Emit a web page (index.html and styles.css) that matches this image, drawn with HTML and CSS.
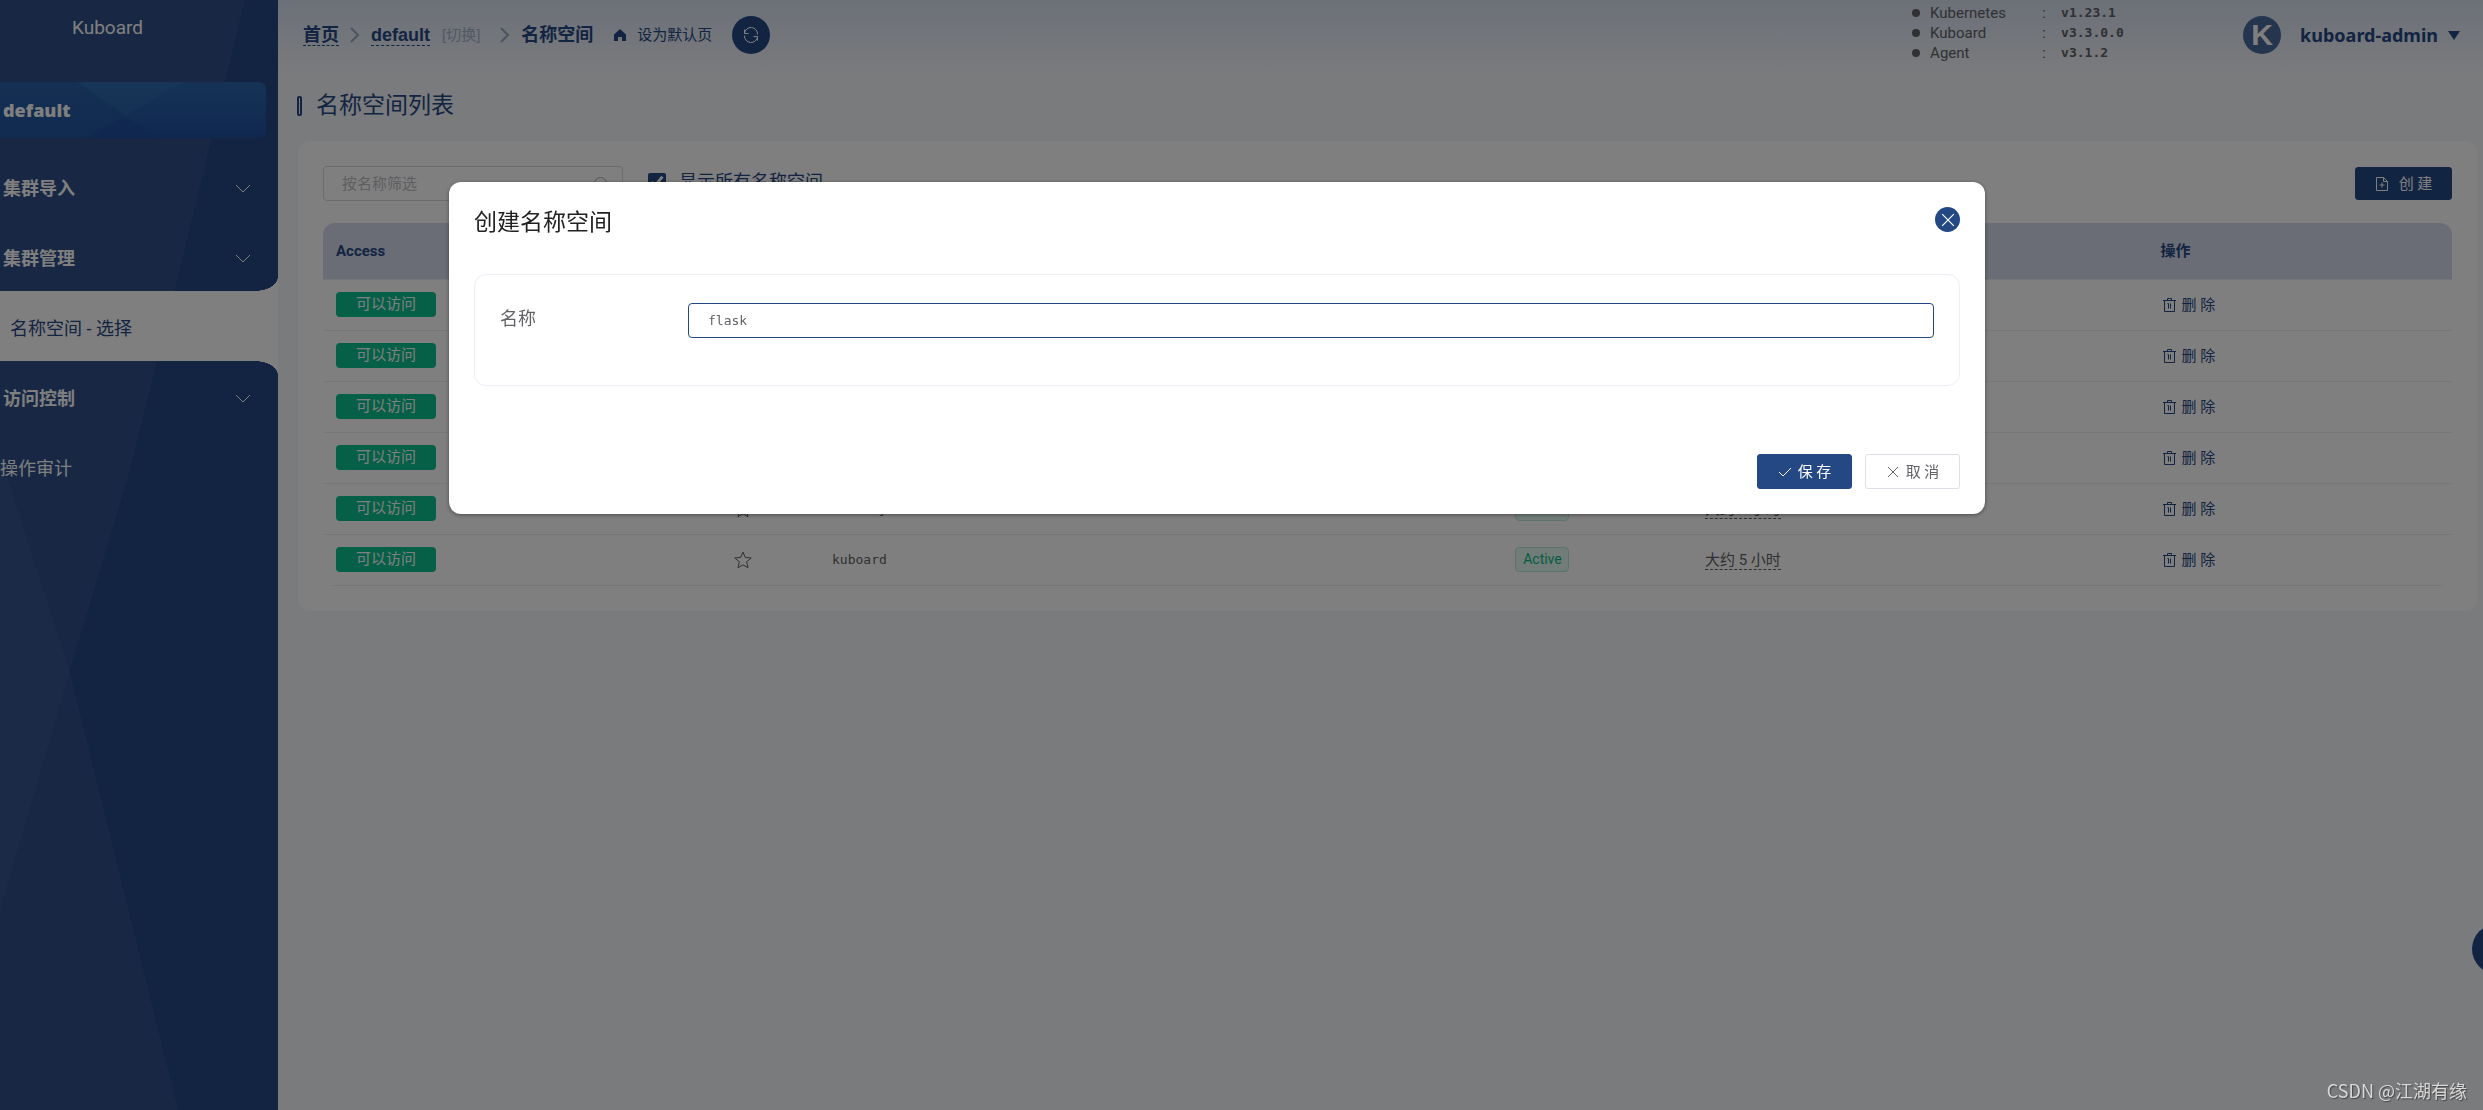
FILE: index.html
```html
<!DOCTYPE html>
<html lang="zh-CN">
<head>
  <meta charset="UTF-8">
  <title>Kuboard</title>
  <link rel="stylesheet" href="styles.css">
</head>
<body>
  <svg class="sprite" aria-hidden="true">
    <symbol id="i-right" viewBox="0 0 10 16"><path d="M1 1l7 7-7 7"/></symbol>
    <symbol id="i-down" viewBox="0 0 14 8"><path d="M0 0l7 7 7-7"/></symbol>
    <symbol id="i-star" viewBox="0 0 18 18"><path d="M9 1l2.200 5.300 6 .7-4.500 3.700 1.300 6L9 13.800l-5 2.900 1.300-6L.800 7l6-.7z"/></symbol>
    <symbol id="i-trash" viewBox="0 0 14 14"><path d="M0 2.500h13M4.500 2.500v-2h4v2M1.500 2.500v11h10v-11M4.500 5.500h1v5M7.500 5.500v5"/></symbol>
    <symbol id="i-file" viewBox="0 0 14 14"><path d="M1.500.5h7l4 4v9h-11zM8.500.5v4h4M7 5.500v5M4.500 8h5"/></symbol>
    <symbol id="i-check" viewBox="0 0 14 10"><path d="M1 5l4 4 8-8"/></symbol>
    <symbol id="i-close" viewBox="0 0 12 12"><path d="M1 1l10 10M11 1L1 11"/></symbol>
    <symbol id="i-search" viewBox="0 0 16 16"><path d="M13.500 7.500a6 6 0 1 1-12 0 6 6 0 0 1 12 0zM12 12l4 4"/></symbol>
    <symbol id="i-refresh" viewBox="0 0 16 16"><path d="M1.500 6.500a6.500 6.500 0 0 1 13 1M1.500 2.500v4h4M14.500 9.500a6.500 6.500 0 0 1-13-1M14.500 13.500v-4h-4"/></symbol>
  </svg>

  <div class="layout">
    <aside class="sidebar">
      <div class="brand">Kuboard</div>
      <div class="cluster">default</div>
      <nav class="menu">
        <button class="menu-item group">集群导入<svg class="icon chevron"><use href="#i-down"/></svg></button>
        <button class="menu-item group">集群管理<svg class="icon chevron"><use href="#i-down"/></svg></button>
        <a class="menu-item active" href="#">名称空间 - 选择</a>
        <button class="menu-item group">访问控制<svg class="icon chevron"><use href="#i-down"/></svg></button>
        <a class="menu-item leaf" href="#">操作审计</a>
      </nav>
    </aside>

    <div class="main">
      <header class="topbar">
        <div class="breadcrumb">
          <a class="crumb" href="#">首页</a>
          <svg class="icon sep"><use href="#i-right"/></svg>
          <a class="crumb" href="#">default</a>
          <a class="switch" href="#">[切换]</a>
          <svg class="icon sep sep-wide"><use href="#i-right"/></svg>
          <strong>名称空间</strong>
          <a class="set-home" href="#">
            <svg width="12" height="12" viewBox="0 0 12 12" fill="currentColor"><path d="M6 0l6 5.500V12H8V8H4v4H0V5.500z"/></svg>
            设为默认页
          </a>
          <button class="refresh" aria-label="刷新"><svg class="icon"><use href="#i-refresh"/></svg></button>
        </div>
        <div class="account">
          <ul class="versions">
            <li><span class="v-name">Kubernetes</span><span class="v-colon">:</span><b>v1.23.1</b></li>
            <li><span class="v-name">Kuboard</span><span class="v-colon">:</span><b>v3.3.0.0</b></li>
            <li><span class="v-name">Agent</span><span class="v-colon">:</span><b>v3.1.2</b></li>
          </ul>
          <button class="user"><span class="avatar">K</span>kuboard-admin<span class="caret"></span></button>
        </div>
      </header>

      <h1 class="page-title">名称空间列表</h1>

      <section class="card">
        <div class="toolbar">
          <div class="search">
            <input type="text" placeholder="按名称筛选" aria-label="按名称筛选">
            <svg class="icon"><use href="#i-search"/></svg>
          </div>
          <label class="show-all"><input type="checkbox" checked>显示所有名称空间</label>
          <button class="btn primary create"><svg class="icon"><use href="#i-file"/></svg>创 建</button>
        </div>

        <table class="ns-table">
          <colgroup>
            <col class="c-access"><col class="c-star"><col class="c-name"><col class="c-status"><col class="c-age"><col class="c-ops">
          </colgroup>
          <thead>
            <tr><th>Access</th><th></th><th>名称</th><th>状态</th><th>存在时长</th><th>操作</th></tr>
          </thead>
          <tbody>
            <tr>
              <td><span class="badge">可以访问</span></td>
              <td class="star"><svg class="icon"><use href="#i-star"/></svg></td>
              <td class="name">default</td>
              <td><span class="status">Active</span></td>
              <td><span class="age">大约 5 小时</span></td>
              <td><button class="delete"><svg class="icon"><use href="#i-trash"/></svg>删 除</button></td>
            </tr>
            <tr>
              <td><span class="badge">可以访问</span></td>
              <td class="star"><svg class="icon"><use href="#i-star"/></svg></td>
              <td class="name">ingress-nginx</td>
              <td><span class="status">Active</span></td>
              <td><span class="age">大约 5 小时</span></td>
              <td><button class="delete"><svg class="icon"><use href="#i-trash"/></svg>删 除</button></td>
            </tr>
            <tr>
              <td><span class="badge">可以访问</span></td>
              <td class="star"><svg class="icon"><use href="#i-star"/></svg></td>
              <td class="name">kube-node-lease</td>
              <td><span class="status">Active</span></td>
              <td><span class="age">大约 5 小时</span></td>
              <td><button class="delete"><svg class="icon"><use href="#i-trash"/></svg>删 除</button></td>
            </tr>
            <tr>
              <td><span class="badge">可以访问</span></td>
              <td class="star"><svg class="icon"><use href="#i-star"/></svg></td>
              <td class="name">kube-public</td>
              <td><span class="status">Active</span></td>
              <td><span class="age">大约 5 小时</span></td>
              <td><button class="delete"><svg class="icon"><use href="#i-trash"/></svg>删 除</button></td>
            </tr>
            <tr>
              <td><span class="badge">可以访问</span></td>
              <td class="star"><svg class="icon"><use href="#i-star"/></svg></td>
              <td class="name">kube-system</td>
              <td><span class="status">Active</span></td>
              <td><span class="age">大约 5 小时</span></td>
              <td><button class="delete"><svg class="icon"><use href="#i-trash"/></svg>删 除</button></td>
            </tr>
            <tr>
              <td><span class="badge">可以访问</span></td>
              <td class="star"><svg class="icon"><use href="#i-star"/></svg></td>
              <td class="name">kuboard</td>
              <td><span class="status">Active</span></td>
              <td><span class="age">大约 5 小时</span></td>
              <td><button class="delete"><svg class="icon"><use href="#i-trash"/></svg>删 除</button></td>
            </tr>
          </tbody>
        </table>
      </section>
    </div>
  </div>

  <button class="float-btn" aria-label="工具"></button>

  <div class="overlay">
    <form class="dialog" role="dialog" aria-labelledby="dialog-title">
      <div class="dialog-head">
        <h2 id="dialog-title">创建名称空间</h2>
        <button type="button" class="close" aria-label="关闭"><svg class="icon"><use href="#i-close"/></svg></button>
      </div>
      <div class="dialog-body">
        <label for="ns-name">名称</label>
        <input id="ns-name" type="text" value="flask">
      </div>
      <div class="dialog-foot">
        <button type="button" class="btn primary"><svg class="icon"><use href="#i-check"/></svg>保 存</button>
        <button type="button" class="btn"><svg class="icon"><use href="#i-close"/></svg>取 消</button>
      </div>
    </form>
  </div>

  <div class="watermark">CSDN @江湖有缘</div>
</body>
</html>
```

FILE: styles.css
```css
*,
*::before,
*::after {
  box-sizing: border-box;
}

body {
  margin: 0;
  font-family: Roboto, "Noto Sans CJK SC", sans-serif;
  font-size: 15px;
  line-height: 20px;
  color: #606266;
  background: #f4f6fa;
  overflow: hidden;
}

button, input {
  font: inherit;
  color: inherit;
}

button {
  border: none;
  background: none;
  padding: 0;
  cursor: pointer;
}

a {
  color: inherit;
  text-decoration: none;
}

.sprite {
  position: absolute;
  width: 0;
  height: 0;
}

.icon {
  width: 14px;
  height: 14px;
  flex: none;
  fill: none;
  stroke: currentColor;
  stroke-width: 1;
}

.layout {
  display: flex;
  min-height: 100vh;
}

/* sidebar */
.sidebar {
  position: relative;
  width: 278px;
  flex: none;
  background: #264884;
  color: #fff;
  font-size: 18px;
}

.sidebar::before,
.sidebar::after {
  content: "";
  position: absolute;
  inset: 0;
  background: rgba(255, 255, 255, 0.045);
}

.sidebar::before {
  clip-path: polygon(0 0, 88% 0, 63% 26%, 46% 43%, 25% 60.500%, 0 82%);
}

.sidebar::after {
  clip-path: polygon(0 41%, 25% 60.500%, 64% 100%, 0 100%);
}

.brand,
.cluster,
.menu {
  position: relative;
  z-index: 1;
}

.brand {
  height: 82px;
  padding: 18px 60px 0 72px;
  font-size: 19px;
}

.cluster {
  height: 56px;
  margin-right: 12px;
  padding-left: 3px;
  border-radius: 0 7px 7px 0;
  background: linear-gradient(35deg, rgba(30, 70, 150, 0.3) 45%, transparent 46%),
    linear-gradient(150deg, rgba(60, 130, 180, 0.2) 50%, transparent 51%),
    linear-gradient(#2c66ac, #2050a0);
  font-family: "Open Sans", sans-serif;
  font-weight: 800;
  line-height: 56px;
}

.menu {
  padding-top: 13px;
}

.menu-item {
  position: relative;
  display: flex;
  align-items: center;
  justify-content: space-between;
  width: 100%;
  height: 70px;
  padding: 6px 28px 0 3px;
}

.group {
  font-weight: bold;
}

.chevron {
  height: 8px;
}

.active {
  padding-left: 10px;
  background: #fff;
  color: #264884;
}

.active::before,
.active::after {
  content: "";
  position: absolute;
  right: 0;
  width: 23px;
  height: 14px;
}

.active::before {
  top: -14px;
  background: radial-gradient(23px 14px at 0 0, transparent 98%, #fff);
}

.active::after {
  bottom: -14px;
  background: radial-gradient(23px 14px at 0 100%, transparent 98%, #fff);
}

.leaf {
  padding-left: 0;
}

/* top bar */
.main {
  flex: 1;
  min-width: 0;
  background: linear-gradient(#d8e1f1, #f4f6fa 75px);
}

.topbar {
  display: flex;
  justify-content: space-between;
  height: 70px;
  padding: 0 21px 0 25px;
  color: #264884;
}

.breadcrumb {
  display: flex;
  align-items: center;
  height: 70px;
  font-family: "Liberation Sans", "Noto Sans CJK SC", sans-serif;
}

.breadcrumb strong {
  font-size: 18px;
}

.crumb {
  font-size: 18px;
  font-weight: bold;
  border-bottom: 1px dashed #264884;
}

.sep {
  width: 10px;
  height: 16px;
  margin: 0 11px;
  stroke-width: 2;
  color: #99a5bd;
}

.sep-wide {
  margin-left: 20px;
}

.switch {
  margin-left: 12px;
  color: #a4b0c8;
}

.set-home {
  display: flex;
  align-items: center;
  gap: 11px;
  margin: 0 20px 0 21px;
}

.refresh {
  display: flex;
  align-items: center;
  justify-content: center;
  width: 38px;
  height: 38px;
  border-radius: 50%;
  background: #264884;
  color: #fff;
}

.refresh .icon {
  width: 16px;
  height: 16px;
}

.account {
  display: flex;
}

.versions {
  margin: 0;
  padding: 3px 0 0;
  list-style: none;
  color: #606266;
}

.versions li {
  display: flex;
  align-items: center;
  height: 20px;
}

.versions li::before {
  content: "";
  width: 8px;
  height: 8px;
  margin-right: 10px;
  border-radius: 50%;
  background: #606266;
}

.v-name {
  width: 112px;
}

.v-colon {
  width: 19px;
}

.versions b {
  width: 182px;
  font-family: "DejaVu Sans Mono", monospace;
  font-size: 13px;
}

.user {
  display: flex;
  align-items: center;
  height: 70px;
  font-family: "Noto Sans", sans-serif;
  font-size: 18px;
  font-weight: bold;
}

.avatar {
  width: 38px;
  height: 38px;
  margin-right: 19px;
  border-radius: 50%;
  background: #4b6a9c;
  color: #fff;
  font-family: "Liberation Sans", sans-serif;
  font-size: 30px;
  line-height: 38px;
}

.caret {
  margin: 0 2px 0 10px;
  border: 6px solid transparent;
  border-top: 9px solid #264884;
  border-bottom: 0;
}

.page-title {
  display: flex;
  align-items: center;
  gap: 14px;
  height: 71px;
  margin: 0;
  padding: 0 0 0 19px;
  color: #264884;
  font-size: 23px;
  font-weight: normal;
}

.page-title::before {
  content: "";
  width: 5px;
  height: 20px;
  border: 2px solid #264884;
  border-radius: 2px;
}

/* list */
.card {
  margin: 0 6px 0 20px;
  padding: 25px;
  border-radius: 12px;
  background: #fff;
}

.toolbar {
  display: flex;
  align-items: center;
  height: 35px;
  margin-bottom: 22px;
}

.search {
  position: relative;
  width: 300px;
  margin-right: 25px;
}

.search input {
  width: 100%;
  height: 35px;
  padding: 0 18px;
  border: 1px solid #d4d8e0;
  border-radius: 4px;
  background: #fff;
}

.search input::placeholder {
  color: #bbbdc2;
}

.search .icon {
  position: absolute;
  right: 14px;
  top: 10px;
  width: 16px;
  height: 16px;
  color: #a8abb2;
}

.show-all {
  display: flex;
  align-items: center;
  gap: 13px;
  height: 32px;
  margin-bottom: 3px;
  color: #264884;
  font-size: 18px;
}

.show-all input {
  width: 18px;
  height: 18px;
  margin: 0;
  accent-color: #264884;
}

.btn {
  display: flex;
  align-items: center;
  justify-content: center;
  gap: 6px;
  width: 95px;
  height: 35px;
  border: 1px solid #dcdfe8;
  border-radius: 3px;
  background: #fff;
}

.btn.primary {
  border-color: #234883;
  background: #234883;
  color: #fff;
}

.create {
  gap: 10px;
  width: 97px;
  height: 33px;
  margin-left: auto;
}

.ns-table {
  width: 100%;
  border-radius: 12px;
  overflow: hidden;
  border-spacing: 0;
  table-layout: fixed;
}

.c-access { width: 16.2%; }
.c-star { width: 7.1%; }
.c-name { width: 32.1%; }
.c-status { width: 8.9%; }
.c-age { width: 21.4%; }
.c-ops { width: 14.3%; }

.ns-table th,
.ns-table td {
  padding: 0 13px 1px;
  border-bottom: 1px solid #ebeef5;
  text-align: left;
}

.ns-table th {
  height: 57px;
  background: #d4daea;
  color: #264884;
}

.ns-table td {
  height: 51px;
}

.badge {
  display: block;
  width: 100px;
  border-radius: 4px;
  background: #0cc08e;
  color: #fff;
  line-height: 25px;
  text-align: center;
}

.ns-table .star {
  text-align: center;
}

.star .icon {
  display: block;
  width: 18px;
  height: 18px;
  margin: auto;
}

.name {
  font-family: "DejaVu Sans Mono", monospace;
  font-size: 13px;
}

.status {
  display: block;
  width: 54px;
  border: 1px solid #b8e8d8;
  border-radius: 4px;
  background: #e4f8f2;
  color: #0cb888;
  font-size: 14px;
  line-height: 23px;
  text-align: center;
}

.age {
  border-bottom: 1px dashed #606266;
}

.delete {
  display: flex;
  align-items: center;
  gap: 5px;
  padding-left: 2px;
  color: #264884;
}

.float-btn {
  position: fixed;
  right: -39px;
  top: calc(85.5vh - 25px);
  width: 50px;
  height: 50px;
  border-radius: 50%;
  background: #264884;
}

/* create dialog */
.overlay {
  position: fixed;
  inset: 0;
  z-index: 10;
  display: flex;
  justify-content: center;
  align-items: flex-start;
  padding: 182px 49px 0 0;
  background: rgba(0, 0, 0, 0.5);
}

.dialog {
  width: 1536px;
  padding: 25px;
  border-radius: 12px;
  background: #fff;
  box-shadow: 0 1px 4px rgba(0, 0, 0, 0.4);
}

.dialog-head {
  display: flex;
  justify-content: space-between;
  height: 67px;
}

.dialog-head h2 {
  margin: 0;
  color: #222;
  font-size: 23px;
  font-weight: normal;
  line-height: 32px;
}

.close {
  display: flex;
  align-items: center;
  justify-content: center;
  width: 25px;
  height: 25px;
  border-radius: 50%;
  background: #234883;
  color: #fff;
}

.dialog-body {
  display: flex;
  height: 112px;
  margin-bottom: 68px;
  padding: 28px 25px;
  border: 1px solid #ebeef8;
  border-radius: 12px;
}

.dialog-body label {
  width: 188px;
  font-size: 18px;
  line-height: 32px;
}

.dialog-body input {
  flex: 1;
  height: 35px;
  padding: 0 19px;
  border: 1px solid #234883;
  border-radius: 4px;
  outline: none;
  font-family: "DejaVu Sans Mono", monospace;
  font-size: 13px;
}

.dialog-foot {
  display: flex;
  justify-content: flex-end;
  gap: 13px;
}

.dialog-foot .icon {
  height: 12px;
}

.watermark {
  position: fixed;
  right: 16px;
  bottom: 10px;
  z-index: 11;
  color: #d8d8d8;
  font-family: "Noto Sans CJK SC", sans-serif;
  font-size: 18px;
  text-shadow: 1px 1px 1px #444;
}
```
